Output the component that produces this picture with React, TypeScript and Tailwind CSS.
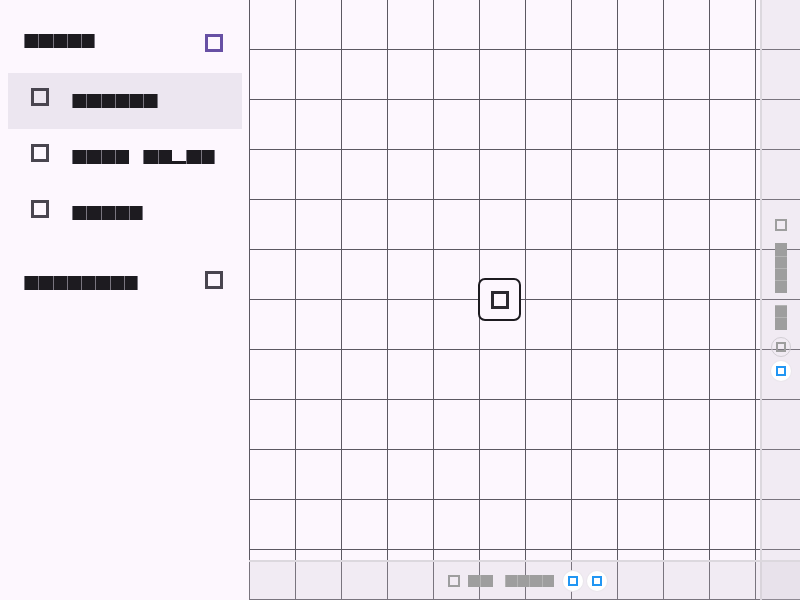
import clsx from "clsx";

type Variant = "dark" | "gray" | "grayCol";

// glyph cells: each character sits in its own box, the text stays real but is hidden
function Tofu({ text, variant = "dark" }: { text: string; variant?: Variant }) {
  const chars = Array.from(text);
  return (
    <span
      className={clsx(
        "flex font-['Liberation_Sans',sans-serif]",
        variant === "grayCol" ? "flex-col" : "flex-row"
      )}
    >
      {chars.map((c, i) => {
        if (variant === "dark") {
          if (c === " ")
            return (
              <span key={i} className="flex-none w-[14.3px] h-[14px] text-transparent text-[10px] leading-[14px]">
                {"\u00a0"}
              </span>
            );
          if (c === "_")
            return (
              <span key={i} className="flex-none w-[14.3px] h-[14px] border-b-[3px] border-[#1d1b20] overflow-hidden text-transparent text-[10px] leading-[11px]">
                _
              </span>
            );
          return (
            <span key={i} className="flex-none w-[14.3px] h-[14px] bg-[#1d1b20] border-l border-[#7a7680] last:border-r overflow-hidden text-transparent text-[10px] leading-[14px] text-center">
              {c}
            </span>
          );
        }
        if (variant === "gray") {
          if (c === " ")
            return (
              <span key={i} className="flex-none w-[12.3px] h-[12.3px] text-transparent text-[9px] leading-[12px]">
                {"\u00a0"}
              </span>
            );
          return (
            <span key={i} className="flex-none w-[12.3px] h-[12.3px] bg-[#9e9e9e] border-l border-[#b4b4b4] first:border-l-0 overflow-hidden text-transparent text-[9px] leading-[12px] text-center">
              {c}
            </span>
          );
        }
        if (c === " ")
          return (
            <span key={i} className="flex-none w-[12.3px] h-[12.3px] text-transparent text-[9px] leading-[12px]">
              {"\u00a0"}
            </span>
          );
        return (
          <span key={i} className="flex-none w-[12.3px] h-[12.3px] bg-[#9e9e9e] border-t border-[#b4b4b4] first:border-t-0 overflow-hidden text-transparent text-[9px] leading-[12px] text-center">
            {c}
          </span>
        );
      })}
    </span>
  );
}

function Sq({ className }: { className?: string }) {
  return <span className={clsx("block flex-none w-[18px] h-[18px] border-[3px]", className)} />;
}

const items = [
  { label: "Select", active: true },
  { label: "Grid 16_px", active: false },
  { label: "Erase", active: false },
];

export default function App() {
  return (
    <div className="flex h-[600px] w-[800px] overflow-hidden bg-[#fdf7fe] font-['Liberation_Sans',sans-serif]">
      {/* Side panel */}
      <aside className="w-[249px] flex-none flex flex-col">
        <div className="h-[73px] flex items-start justify-between pl-6 pr-[26px] pt-[34px]">
          <Tofu text="Tools" />
          <Sq className="border-[#6750a4]" />
        </div>

        <nav className="flex flex-col">
          {items.map((it) => (
            <div
              key={it.label}
              className={clsx(
                "ml-2 w-[234px] h-[56px] flex items-start pl-[23px]",
                it.active && "bg-[#ece6f0]"
              )}
            >
              <Sq className="mt-[15px] border-[#49454f]" />
              <span className="ml-[23px] mt-[21px]">
                <Tofu text={it.label} />
              </span>
            </div>
          ))}
        </nav>

        <div className="flex items-start justify-between pl-6 pr-[26px] pt-[30px]">
          <span className="mt-[5px]">
            <Tofu text="Settings" />
          </span>
          <Sq className="border-[#49454f]" />
        </div>
      </aside>

      {/* Canvas */}
      <main className="relative flex-1 h-full bg-[linear-gradient(to_right,#5c5862_1.4px,transparent_1.4px),linear-gradient(to_top,#5c5862_1.4px,transparent_1.4px)] bg-size-[46px_50px]">
        {/* node */}
        <div className="absolute left-[229px] top-[278px] w-[43px] h-[43px] rounded-[7px] border-2 border-[#1d1b20] bg-[#fdf7fe] flex items-center justify-center">
          <Sq className="border-[#2b2930]" />
        </div>

        {/* right rail */}
        <div className="absolute right-0 top-0 bottom-0 w-[40px] border-l-2 border-[#dcd8de] bg-[#cfc9d3]/25 flex flex-col items-center justify-center">
          <span className="block w-[12px] h-[12px] border-2 border-[#9e9e9e]" />
          <span className="mt-[12px]">
            <Tofu text="Zoom in" variant="grayCol" />
          </span>
          <span className="mt-[7px] w-[20px] h-[20px] rounded-full border border-[#d2ced4] flex items-center justify-center">
            <span className="block w-[10px] h-[10px] border-2 border-[#9e9e9e]" />
          </span>
          <span className="mt-[4px] w-[20px] h-[20px] rounded-full bg-white shadow-[0_0_0_1px_#ebe7ed] flex items-center justify-center">
            <span className="block w-[10px] h-[10px] border-2 border-[#2196f3]" />
          </span>
        </div>

        {/* bottom bar */}
        <div className="absolute left-0 right-0 bottom-0 h-[40px] border-t-2 border-[#dcd8de] bg-[#cfc9d3]/25 flex items-center justify-center pl-[6px]">
          <span className="block w-[12px] h-[12px] border-2 border-[#9e9e9e]" />
          <span className="ml-[8px]">
            <Tofu text="Zm 100%" variant="gray" />
          </span>
          <span className="ml-[9px] w-[20px] h-[20px] rounded-full bg-white shadow-[0_0_0_1px_#ebe7ed] flex items-center justify-center">
            <span className="block w-[10px] h-[10px] border-2 border-[#2196f3]" />
          </span>
          <span className="ml-[4px] w-[20px] h-[20px] rounded-full bg-white shadow-[0_0_0_1px_#ebe7ed] flex items-center justify-center">
            <span className="block w-[10px] h-[10px] border-2 border-[#2196f3]" />
          </span>
        </div>
      </main>
    </div>
  );
}
